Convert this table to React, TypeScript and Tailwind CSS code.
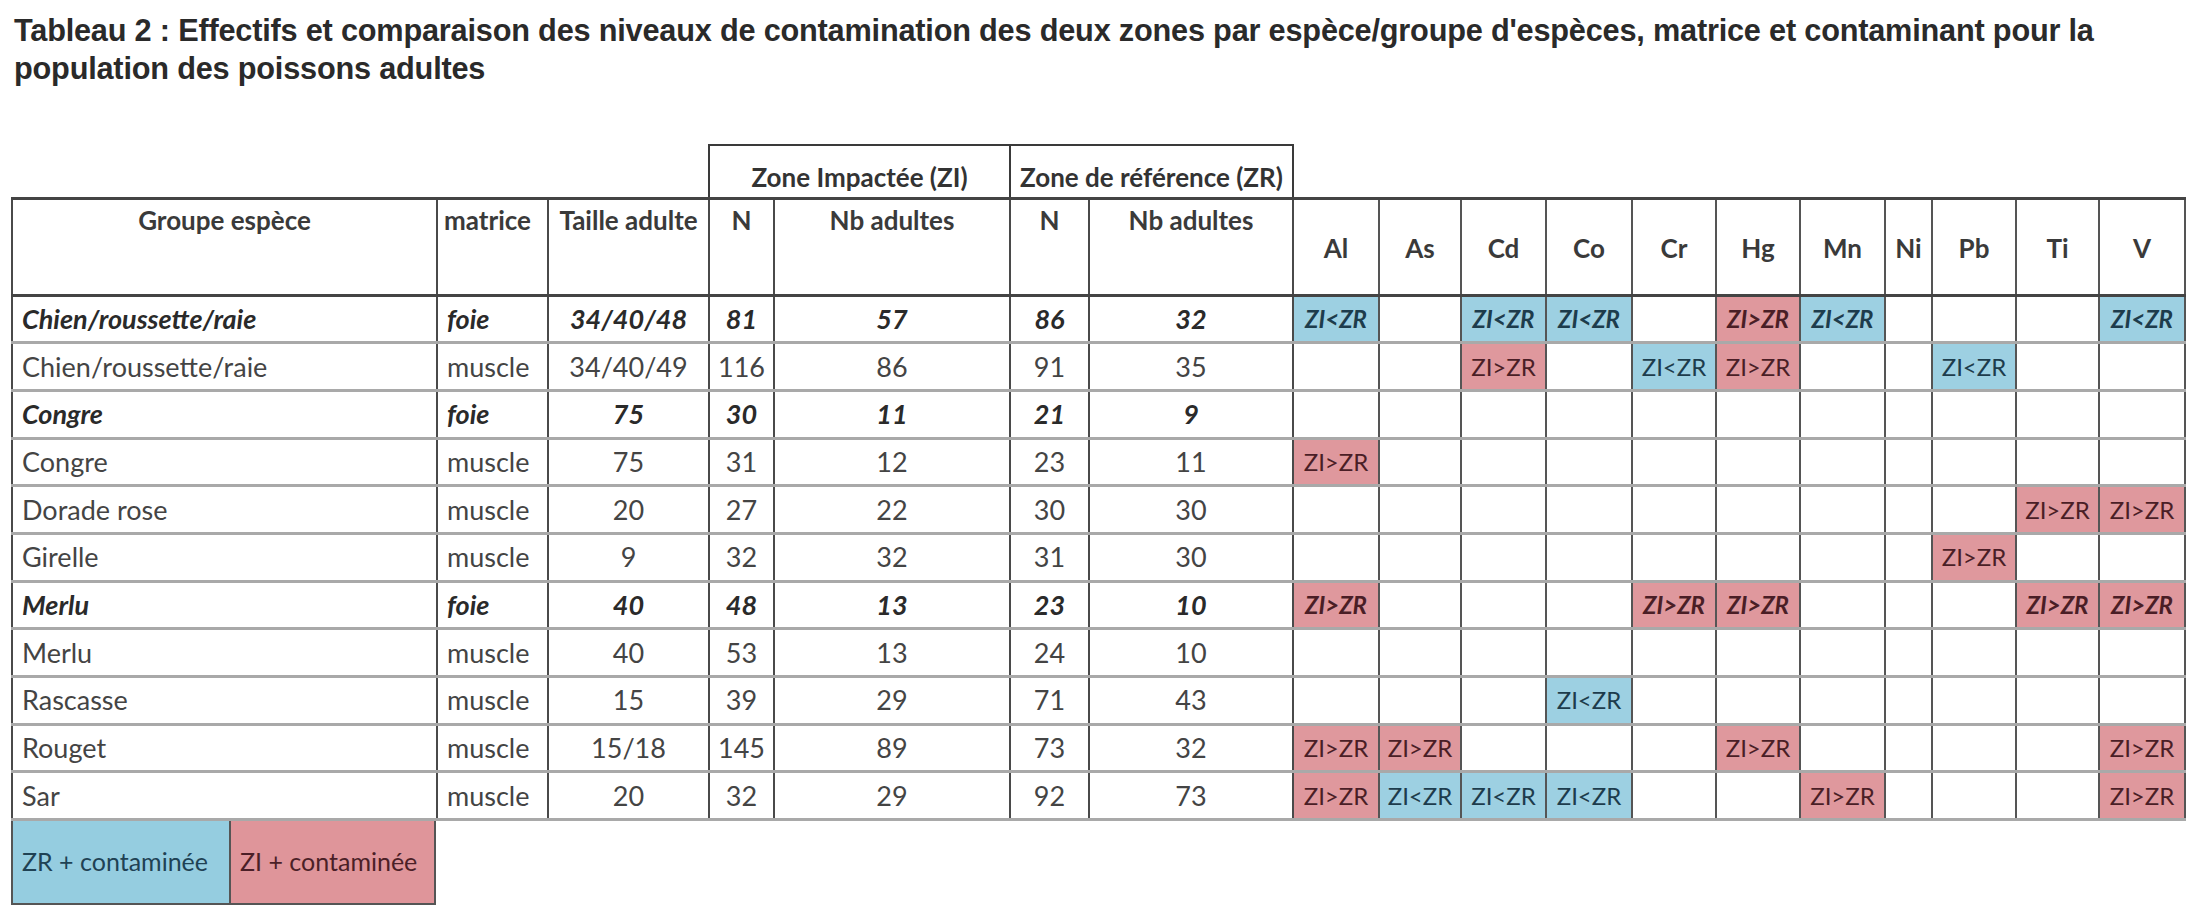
import React from "react"

type Mark = "" | "lt" | "gt"

const elements = ["Al", "As", "Cd", "Co", "Cr", "Hg", "Mn", "Ni", "Pb", "Ti", "V"]

const colWidths = [
  "w-[425px]",
  "w-[111px]",
  "w-[161px]",
  "w-[65px]",
  "w-[236px]",
  "w-[79px]",
  "w-[204px]",
  "w-[86px]",
  "w-[82px]",
  "w-[85px]",
  "w-[86px]",
  "w-[84px]",
  "w-[84px]",
  "w-[85px]",
  "w-[47px]",
  "w-[84px]",
  "w-[83px]",
  "w-[86px]",
]

const rows: {
  name: string
  matrice: string
  taille: string
  ziN: string
  ziNb: string
  zrN: string
  zrNb: string
  foie: boolean
  marks: Mark[]
}[] = [
  { name: "Chien/roussette/raie", matrice: "foie", taille: "34/40/48", ziN: "81", ziNb: "57", zrN: "86", zrNb: "32", foie: true, marks: ["lt", "", "lt", "lt", "", "gt", "lt", "", "", "", "lt"] },
  { name: "Chien/roussette/raie", matrice: "muscle", taille: "34/40/49", ziN: "116", ziNb: "86", zrN: "91", zrNb: "35", foie: false, marks: ["", "", "gt", "", "lt", "gt", "", "", "lt", "", ""] },
  { name: "Congre", matrice: "foie", taille: "75", ziN: "30", ziNb: "11", zrN: "21", zrNb: "9", foie: true, marks: ["", "", "", "", "", "", "", "", "", "", ""] },
  { name: "Congre", matrice: "muscle", taille: "75", ziN: "31", ziNb: "12", zrN: "23", zrNb: "11", foie: false, marks: ["gt", "", "", "", "", "", "", "", "", "", ""] },
  { name: "Dorade rose", matrice: "muscle", taille: "20", ziN: "27", ziNb: "22", zrN: "30", zrNb: "30", foie: false, marks: ["", "", "", "", "", "", "", "", "", "gt", "gt"] },
  { name: "Girelle", matrice: "muscle", taille: "9", ziN: "32", ziNb: "32", zrN: "31", zrNb: "30", foie: false, marks: ["", "", "", "", "", "", "", "", "gt", "", ""] },
  { name: "Merlu", matrice: "foie", taille: "40", ziN: "48", ziNb: "13", zrN: "23", zrNb: "10", foie: true, marks: ["gt", "", "", "", "gt", "gt", "", "", "", "gt", "gt"] },
  { name: "Merlu", matrice: "muscle", taille: "40", ziN: "53", ziNb: "13", zrN: "24", zrNb: "10", foie: false, marks: ["", "", "", "", "", "", "", "", "", "", ""] },
  { name: "Rascasse", matrice: "muscle", taille: "15", ziN: "39", ziNb: "29", zrN: "71", zrNb: "43", foie: false, marks: ["", "", "", "lt", "", "", "", "", "", "", ""] },
  { name: "Rouget", matrice: "muscle", taille: "15/18", ziN: "145", ziNb: "89", zrN: "73", zrNb: "32", foie: false, marks: ["gt", "gt", "", "", "", "gt", "", "", "", "", "gt"] },
  { name: "Sar", matrice: "muscle", taille: "20", ziN: "32", ziNb: "29", zrN: "92", zrNb: "73", foie: false, marks: ["gt", "lt", "lt", "lt", "", "", "gt", "", "", "", "gt"] },
]

const cell = "border-x-2 border-[#4a4a4a] px-[6px]"

function MarkCell({ mark, foie }: { mark: Mark; foie: boolean }) {
  const bg = mark === "lt" ? "bg-[#9dd0e2] text-[#1d3c4c]" : mark === "gt" ? "bg-[#df989d] text-[#4a1e26]" : ""
  return (
    <td className={`border-x-2 border-[#555] px-0 text-center text-[24px] ${bg} ${foie ? "font-bold italic" : ""}`}>
      {mark === "lt" ? "ZI<ZR" : mark === "gt" ? "ZI>ZR" : ""}
    </td>
  )
}

export default function App() {
  return (
    <div className="min-h-[919px] w-[2200px] bg-white text-[#2e2e2e]">
      <h1 className="pl-[14px] pt-[12px] font-['Liberation_Sans',Arial,sans-serif] text-[30.7px] font-bold leading-[38px] tracking-[-0.2px] text-[#2a2a2a]">
        Tableau 2 : Effectifs et comparaison des niveaux de contamination des deux zones par espèce/groupe d'espèces, matrice et contaminant pour la
        <br />
        population des poissons adultes
      </h1>

      <div className="ml-[11px] mt-[56px] font-['Lato','Noto_Sans',sans-serif]">
        <table className="table-fixed border-collapse">
          <colgroup>
            {colWidths.map((w, i) => (
              <col key={i} className={w} />
            ))}
          </colgroup>
          <thead>
            <tr className="h-[53px]">
              <th colSpan={3} />
              <th colSpan={2} className="border-2 border-b-0 border-[#3a3a3a] pt-[12px] align-middle text-[26px] leading-tight font-bold text-[#333]">
                Zone Impactée (ZI)
              </th>
              <th colSpan={2} className="border-2 border-b-0 border-[#3a3a3a] pt-[12px] align-middle text-[26px] leading-tight font-bold text-[#333]">
                Zone de référence (ZR)
              </th>
              <th colSpan={11} />
            </tr>
            <tr className="h-[97px] border-y-[3px] border-[#444] text-[26px] leading-tight font-bold text-[#3a3a3a]">
              <th className={`${cell} pt-[4px] align-top`}>Groupe espèce</th>
              <th className={`${cell} pt-[4px] text-left align-top`}>matrice</th>
              <th className={`${cell} pt-[4px] align-top`}>Taille adulte</th>
              <th className={`${cell} px-0 pt-[4px] align-top`}>N</th>
              <th className={`${cell} pt-[4px] align-top`}>Nb adultes</th>
              <th className={`${cell} px-0 pt-[4px] align-top`}>N</th>
              <th className={`${cell} pt-[4px] align-top`}>Nb adultes</th>
              {elements.map((el) => (
                <th key={el} className="border-x-2 border-[#555] px-0 pt-[4px] align-middle">
                  {el}
                </th>
              ))}
            </tr>
          </thead>
          <tbody className="text-[27px] leading-tight">
            {rows.map((r, i) => (
              <tr
                key={i}
                className={`h-[47.7px] border-b-[3px] border-[#a9a9a9] ${r.foie ? "font-bold italic text-[#2a2a2a]" : "text-[#444]"}`}
              >
                <td className={`${cell} px-[9px]`}>{r.name}</td>
                <td className={`${cell} px-[9px]`}>{r.matrice}</td>
                <td className={`${cell} text-center`}>{r.taille}</td>
                <td className={`${cell} px-0 text-center`}>{r.ziN}</td>
                <td className={`${cell} text-center`}>{r.ziNb}</td>
                <td className={`${cell} px-0 text-center`}>{r.zrN}</td>
                <td className={`${cell} text-center`}>{r.zrNb}</td>
                {r.marks.map((m, j) => (
                  <MarkCell key={j} mark={m} foie={r.foie} />
                ))}
              </tr>
            ))}
          </tbody>
        </table>

        <div className="flex h-[84px] w-[425px] border-2 border-t-0 border-[#555] text-[25px]">
          <div className="flex w-[216px] items-center bg-[#95cde0] px-[9px] text-[#1f4254]">ZR + contaminée</div>
          <div className="flex flex-1 items-center border-l-2 border-[#555] bg-[#df959a] px-[9px] text-[#4b1f27]">
            ZI + contaminée
          </div>
        </div>
      </div>
    </div>
  )
}
